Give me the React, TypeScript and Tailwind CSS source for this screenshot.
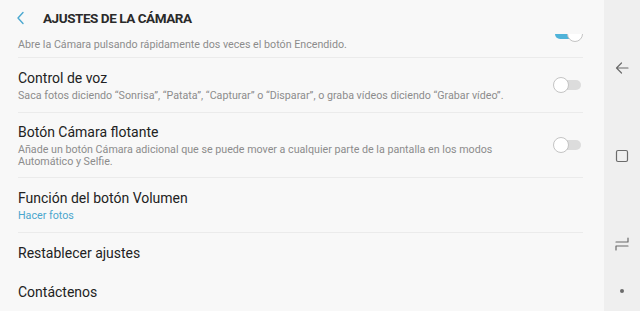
import React from 'react';

function Toggle({ on = false }: { on?: boolean }) {
    return (
        <div className="relative w-[30px] h-[16px] shrink-0">
            <div className={`absolute left-[2px] right-[2px] top-[3px] h-[10px] rounded-full ${on ? 'bg-[#4fb3d9]' : 'bg-[#dcdcdc]'}`} />
            <div className={`absolute top-0 w-[16px] h-[16px] rounded-full bg-white border border-[#c4c4c4] ${on ? 'right-0' : 'left-0'}`} />
        </div>
    );
}

function Row({ title, subtitle, sub2, toggle, divider = true, className = '' }: { title?: string; subtitle?: string; sub2?: boolean; toggle?: 'on' | 'off'; divider?: boolean; className?: string }) {
    return (
        <div className={`flex items-center pl-[18px] pr-[21px] ${className}`}>
            <div className={`flex-1 min-w-0 flex items-center h-full ${divider ? 'border-b border-[#ebebeb]' : ''}`}>
                <div className="flex-1 min-w-0">
                    {title && <div className="text-[14px] leading-[20px] text-[#222222]">{title}</div>}
                    {subtitle && (
                        <div className={`mt-[2px] text-[10.7px] leading-[12px] ${sub2 ? 'text-[#4aa6cd]' : 'text-[#8c8c8c]'} pr-[24px]`}>{subtitle}</div>
                    )}
                </div>
                {toggle && <Toggle on={toggle === 'on'} />}
            </div>
        </div>
    );
}

export default function App() {
    return (
        <div className="w-[640px] h-[311px] flex bg-[#f8f8f8] overflow-hidden" style={{ fontFamily: 'Roboto, "Noto Sans", sans-serif' }}>
            <div className="flex-1 flex flex-col min-w-0">
                <div className="h-[34px] shrink-0 flex items-center pl-[15px] pt-[2px] relative z-10 bg-[#f8f8f8]">
                    <svg width="12" height="14" viewBox="0 0 12 14" fill="none" stroke="#4ba8d0" strokeWidth="1.4" strokeLinecap="round" strokeLinejoin="round">
                        <path d="M8 1.5 L3 7 L8 12.5" />
                    </svg>
                    <div className="ml-[16px] text-[13.5px] font-bold text-[#2a2a2a] tracking-[-0.45px]">AJUSTES DE LA CÁMARA</div>
                </div>
                <div className="flex-1 flex flex-col overflow-hidden">
                    <div className="h-[24px] shrink-0 flex items-center pl-[18px] pr-[21px] relative">
                        <div className="flex-1 h-full flex items-center border-b border-[#ebebeb]">
                            <div className="flex-1 text-[10.7px] leading-[12px] text-[#8c8c8c] mt-[-1px]">Abre la Cámara pulsando rápidamente dos veces el botón Encendido.</div>
                        </div>
                        <div className="absolute right-[21px] top-[-8px]">
                            <Toggle on />
                        </div>
                    </div>
                    <Row className="h-[55px] shrink-0" title="Control de voz" subtitle={'Saca fotos diciendo “Sonrisa”, “Patata”, “Capturar” o “Disparar”, o graba vídeos diciendo “Grabar vídeo”.'} toggle="off" />
                    <Row className="h-[65px] shrink-0" title="Botón Cámara flotante" subtitle="Añade un botón Cámara adicional que se puede mover a cualquier parte de la pantalla en los modos Automático y Selfie." toggle="off" />
                    <Row className="h-[55px] shrink-0" title="Función del botón Volumen" subtitle="Hacer fotos" sub2 />
                    <Row className="h-[39px] shrink-0" title="Restablecer ajustes" divider={false} />
                    <Row className="h-[39px] shrink-0" title="Contáctenos" divider={false} />
                </div>
            </div>
            <div className="w-[36px] shrink-0 bg-[#efefef] flex flex-col items-center">
                <svg className="mt-[61px]" width="14" height="14" viewBox="0 0 14 14" fill="none" stroke="#6b6b6b" strokeWidth="1.2" strokeLinecap="round" strokeLinejoin="round">
                    <path d="M13 7 H1.5 M6.5 2 L1.5 7 L6.5 12" />
                </svg>
                <svg className="mt-[74px]" width="14" height="14" viewBox="0 0 14 14" fill="none" stroke="#6b6b6b" strokeWidth="1.2">
                    <rect x="1.5" y="1.5" width="11" height="11" rx="1.5" />
                </svg>
                <svg className="mt-[73px]" width="14" height="16" viewBox="0 0 14 16" fill="none" stroke="#6b6b6b" strokeWidth="1.2" strokeLinecap="round" strokeLinejoin="round">
                    <path d="M1 6 H13 M13 6 V2 M1 10 H13 M1 10 V14" />
                </svg>
                <div className="mt-[37px] w-[4px] h-[4px] rounded-full bg-[#6b6b6b]" />
            </div>
        </div>
    );
}
